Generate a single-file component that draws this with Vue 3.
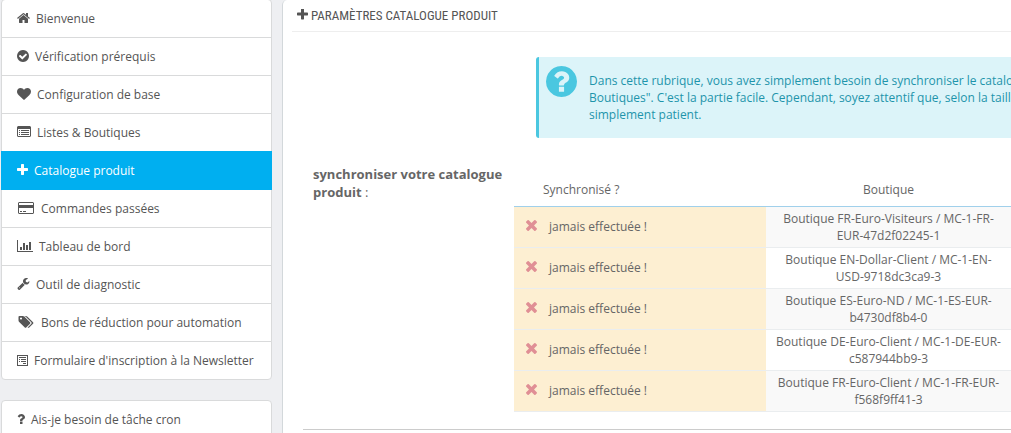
<script setup>
const plus = 'M1600 736v192q0 40-28 68t-68 28h-416v416q0 40-28 68t-68 28h-192q-40 0-68-28t-28-68v-416h-416q-40 0-68-28t-28-68v-192q0-40 28-68t68-28h416v-416q0-40 28-68t68-28h192q40 0 68 28t28 68v416h416q40 0 68 28t28 68z'
const times = 'M1490 1322q0 40-28 68l-136 136q-28 28-68 28t-68-28l-294-294-294 294q-28 28-68 28t-68-28l-136-136q-28-28-28-68t28-68l294-294-294-294q-28-28-28-68t28-68l136-136q28-28 68-28t68 28l294 294 294-294q28-28 68-28t68 28l136 136q28 28 28 68t-28 68l-294 294 294 294q28 28 28 68z'
const help = 'M1024 1376v-192q0-14-9-23t-23-9h-192q-14 0-23 9t-9 23v192q0 14 9 23t23 9h192q14 0 23-9t9-23zm256-672q0-88-55.5-163t-138.5-116-170-41q-243 0-371 213-15 24 8 42l132 100q7 6 19 6 16 0 25-12 53-68 86-92 34-24 86-24 48 0 85.5 26t37.5 59q0 38-20 61t-68 45q-63 28-115.5 86.5t-52.5 125.5v36q0 14 9 23t23 9h192q14 0 23-9t9-23q0-19 21.5-49.5t54.5-49.5q32-18 49-28.5t46-35 44.5-48 28-60.5 12.5-81zm384 192q0 209-103 385.5t-279.5 279.5-385.5 103-385.5-103-279.5-279.5-103-385.5 103-385.5 279.5-279.5 385.5-103 385.5 103 279.5 279.5 103 385.5z'

const menu = [
  { label: 'Bienvenue', w: 13, box: '64 253 1664 1283', d: 'M1472 992v480q0 26-19 45t-45 19h-384v-384h-256v384h-384q-26 0-45-19t-19-45v-480q0-1 .5-3t.5-3l575-474 575 474q1 2 1 6zm223-69l-62 74q-8 9-21 11h-3q-13 0-21-7l-692-577-692 577q-12 8-24 7-13-2-21-11l-62-74q-8-10-7-23.5t11-21.5l719-599q32-26 76-26t76 26l244 204v-195q0-14 9-23t23-9h192q14 0 23 9t9 23v408l219 182q10 8 11 21.5t-7 23.5z' },
  { label: 'Vérification prérequis', w: 12, box: '128 128 1536 1536', d: 'M1412 734q0-28-18-46l-91-90q-19-19-45-19t-45 19l-408 407-226-226q-19-19-45-19t-45 19l-91 90q-18 18-18 46 0 27 18 45l362 362q19 19 45 19 27 0 46-19l543-543q18-18 18-45zm252 162q0 209-103 385.5t-279.5 279.5-385.5 103-385.5-103-279.5-279.5-103-385.5 103-385.5 279.5-279.5 385.5-103 385.5 103 279.5 279.5 103 385.5z' },
  { label: 'Configuration de base', w: 14, box: '0 128 1792 1536', d: 'M896 1664q-26 0-44-18l-624-602q-10-8-27.5-26t-55.5-65.5-68-97.5-53.5-121-23.5-138q0-220 127-344t351-124q62 0 126.5 21.5t120 58 95.5 68.5 76 68q36-36 76-68t95.5-68.5 120-58 126.5-21.5q224 0 351 124t127 344q0 221-229 450l-623 600q-18 18-44 18z' },
  { label: 'Listes & Boutiques', w: 14, box: '0 0 14 12', d: 'M1 0h12l1 1v9l-1 1H1l-1-1V1zM1 3v7h12V3zM2 4h1v1H2zM4 4h8v1H4zM2 6h1v1H2zM4 6h8v1H4zM2 8h1v1H2zM4 8h8v1H4z' },
  { label: 'Catalogue produit', w: 11, box: '192 192 1408 1408', d: plus, active: true },
  { label: 'Commandes passées', w: 18, box: '0 0 18 12', d: 'M2 0h14l1 1v10l-1 1H2l-1-1V1zM2 1v2h14V1zM2 6v5h14V6zM3 9h2v1H3zM6 9h3v1H6z' },
  { label: 'Tableau de bord', w: 16, box: '0 0 16 12', d: 'M0 0h1v11h15v1H0zM3 7h2v3H3zM6 3h2v7H6zM9 5h2v5H9zM12 2h2v8h-2z' },
  { label: 'Outil de diagnostic', w: 13, box: '85 128 1641 1643', d: 'M448 1472q0-26-19-45t-45-19-45 19-19 45 19 45 45 19 45-19 19-45zm644-420l-682 682q-37 37-90 37-52 0-91-37l-106-108q-38-36-38-90 0-53 38-91l681-681q39 98 114.5 173.5t173.5 114.5zm634-435q0 39-23 106-47 134-164.5 217.5t-258.5 83.5q-185 0-316.5-131.5t-131.5-316.5 131.5-316.5 316.5-131.5q58 0 121.5 16.5t107.5 46.5q16 11 16 28t-16 28l-293 169v224l193 107q5-3 79-48.5t135.5-81 70.5-35.5q15 0 23.5 10t8.5 25z' },
  { label: 'Bons de réduction pour automation', w: 18, box: '-128 128 2176 1536', d: 'M448 448q0-53-37.5-90.5t-90.5-37.5-90.5 37.5-37.5 90.5 37.5 90.5 90.5 37.5 90.5-37.5 37.5-90.5zm1067 576q0 53-37 90l-491 492q-39 37-91 37-53 0-90-37l-715-716q-38-37-64.5-101t-26.5-117v-416q0-52 38-90t90-38h416q53 0 117 26.5t102 64.5l715 714q37 39 37 91zm384 0q0 53-37 90l-491 492q-39 37-91 37-36 0-59-14t-53-45l470-470q37-37 37-90 0-52-37-91l-715-714q-38-38-102-64.5t-117-26.5h224q53 0 117 26.5t102 64.5l715 714q37 39 37 91z' },
  { label: "Formulaire d'inscription à la Newsletter", w: 11, box: '0 0 11 12', d: 'M0 1h11v11H0zM1 2v9h9V2zM2 3h7v1H2zM2 5h1v1H2zM4 5h5v1H4zM2 7h1v1H2zM4 7h5v1H4zM6 9h3v1H6z' },
]
const extra = [
  { label: 'Ais-je besoin de tâche cron', w: 8, box: '384 256 1024 1280', d: 'M1088 1256v240q0 16-12 28t-28 12h-240q-16 0-28-12t-12-28v-240q0-16 12-28t28-12h240q16 0 28 12t12 28zm316-600q0 54-15.5 101t-35 76.5-55 59.5-57.5 43.5-61 35.5q-41 23-68.5 65t-27.5 67q0 17-12 32.5t-28 15.5h-240q-15 0-25.5-18.5t-10.5-37.5v-45q0-83 65-156.5t143-108.5q59-27 84-56t25-76q0-42-46.5-74t-107.5-32q-65 0-108 29-35 25-107 115-13 16-31 16-12 0-25-8l-164-125q-13-10-15.5-25t5.5-28q160-266 464-266 80 0 161 31t146 83 106 127.5 41 158.5z' },
]
const groups = [menu, extra]

const shops = [
  ['Boutique FR-Euro-Visiteurs / MC-1-FR-', 'EUR-47d2f02245-1'],
  ['Boutique EN-Dollar-Client / MC-1-EN-', 'USD-9718dc3ca9-3'],
  ['Boutique ES-Euro-ND / MC-1-ES-EUR-', 'b4730df8b4-0'],
  ['Boutique DE-Euro-Client / MC-1-DE-EUR-', 'c587944bb9-3'],
  ['Boutique FR-Euro-Client / MC-1-FR-EUR-', 'f568f9ff41-3'],
]
</script>

<template>
  <div class="page">
    <aside class="sidebar">
      <nav v-for="(group, g) in groups" :key="g" class="list">
        <a v-for="item in group" :key="item.label" href="#" class="item" :class="{ active: item.active }">
          <svg class="icon" :style="{ width: item.w + 'px' }" :viewBox="item.box" aria-hidden="true">
            <path :d="item.d" fill-rule="evenodd" />
          </svg>
          <span>{{ item.label }}</span>
        </a>
      </nav>
    </aside>

    <main class="panel">
      <h3 class="heading">
        <svg class="heading-icon" viewBox="192 192 1408 1408" aria-hidden="true"><path :d="plus" /></svg>
        <span>PARAMÈTRES CATALOGUE PRODUIT</span>
      </h3>
      <div class="form">
        <div class="alert">
          <svg class="alert-icon" viewBox="128 128 1536 1536" aria-hidden="true"><path :d="help" /></svg>
          <p>
            Dans cette rubrique, vous avez simplement besoin de synchroniser le catalogue<br />
            Boutiques". C'est la partie facile. Cependant, soyez attentif que, selon la taille<br />
            simplement patient.
          </p>
        </div>
        <div class="row">
          <div id="sync-label" class="label"><b>synchroniser votre catalogue produit</b> :</div>
          <table class="table" aria-labelledby="sync-label">
            <thead>
              <tr>
                <th class="state">Synchronisé ?</th>
                <th>Boutique</th>
              </tr>
            </thead>
            <tbody>
              <tr v-for="shop in shops" :key="shop[1]">
                <td class="state">
                  <div class="status">
                    <svg class="cross" viewBox="302 366 1188 1188" aria-hidden="true"><path :d="times" /></svg>
                    <span>jamais effectuée !</span>
                  </div>
                </td>
                <td>{{ shop[0] }}<br />{{ shop[1] }}</td>
              </tr>
            </tbody>
          </table>
        </div>
        <hr class="rule" />
      </div>
    </main>
  </div>
</template>

<style>
body {
  margin: 0;
  background: #eeeff2;
}
</style>

<style scoped>
.page {
  display: flex;
  align-items: stretch;
  gap: 10px;
  height: 100vh;
  padding-left: 1px;
  overflow: hidden;
  background: #eeeff2;
  color: #555;
  font: 12px/17px "Open Sans", sans-serif;
}
.sidebar {
  flex: 0 0 271px;
  display: flex;
  flex-direction: column;
  gap: 20px;
}
.list {
  display: flex;
  flex-direction: column;
  flex: none;
}
.item {
  display: flex;
  align-items: center;
  gap: 6px;
  box-sizing: border-box;
  height: 39px;
  margin-top: -1px;
  padding: 0 15px;
  border: 1px solid #d9dadb;
  background: #fff;
  color: #555;
  text-decoration: none;
  white-space: nowrap;
}
.list + .list .item:first-child {
  margin-top: 0;
}
.item:last-child {
  border-radius: 0 0 4px 4px;
}
.item:first-child {
  border-radius: 4px 4px 0 0;
}
.item.active {
  z-index: 1;
  border-color: #00aff0;
  background: #00aff0;
  color: #fff;
}
.icon {
  flex: none;
  height: 12px;
  margin-bottom: 2px;
  fill: currentColor;
}
.panel {
  flex: 1;
  min-width: 0;
  padding-left: 9px;
  overflow: hidden;
  border-left: 1px solid #d3d8db;
  border-top-left-radius: 5px;
  background: #fff;
}
.heading {
  display: flex;
  align-items: center;
  gap: 3px;
  height: 31px;
  margin: 0;
  padding-left: 5px;
  border-bottom: 1px solid #eee;
  font: 400 13px/31px "Ubuntu Condensed", "Roboto Condensed", sans-serif;
  white-space: nowrap;
}
.heading-icon {
  width: 11px;
  height: 11px;
  margin-bottom: 2px;
  fill: #555;
}
.form {
  padding: 25px 0 0 11px;
}
.alert {
  display: flex;
  gap: 12px;
  margin-left: 233px;
  padding: 0 0 0 7px;
  border-left: 3px solid #4ac7e0;
  border-radius: 3px 0 0 3px;
  background: #dcf4f9;
  color: #1e94ab;
  white-space: nowrap;
}
.alert p {
  margin: 0;
  padding: 15px 0;
}
.alert-icon {
  flex: none;
  width: 31px;
  height: 31px;
  margin-top: 9px;
  fill: #4ac7e0;
}
.row {
  display: flex;
  margin-top: 27px;
  color: #666;
}
.label {
  flex: 0 0 191px;
  padding: 0 10px;
  font-size: 13px;
  line-height: 18px;
}
.table {
  flex: 1;
  margin-top: 7px;
  border-spacing: 0;
  table-layout: fixed;
}
th {
  height: 34px;
  padding: 0;
  border-bottom: 1px solid #a0d0eb;
  font-weight: 400;
}
th.state {
  width: 223px;
  padding-left: 29px;
  text-align: left;
}
td {
  padding: 3px 0;
  border-bottom: 1px solid #eaedef;
  text-align: center;
}
tbody tr:nth-child(odd) td {
  background: #f9f9f9;
}
tbody td.state,
tbody tr:nth-child(odd) td.state {
  padding: 3px 0 5px 12px;
  background: #fdefd2;
}
.status {
  display: flex;
  align-items: center;
  gap: 12px;
}
.cross {
  width: 11px;
  height: 11px;
  margin-bottom: 1px;
  fill: #e08f95;
}
.rule {
  height: 1px;
  margin: 17px 0 0;
  border: 0;
  background: #ccc;
}
</style>
